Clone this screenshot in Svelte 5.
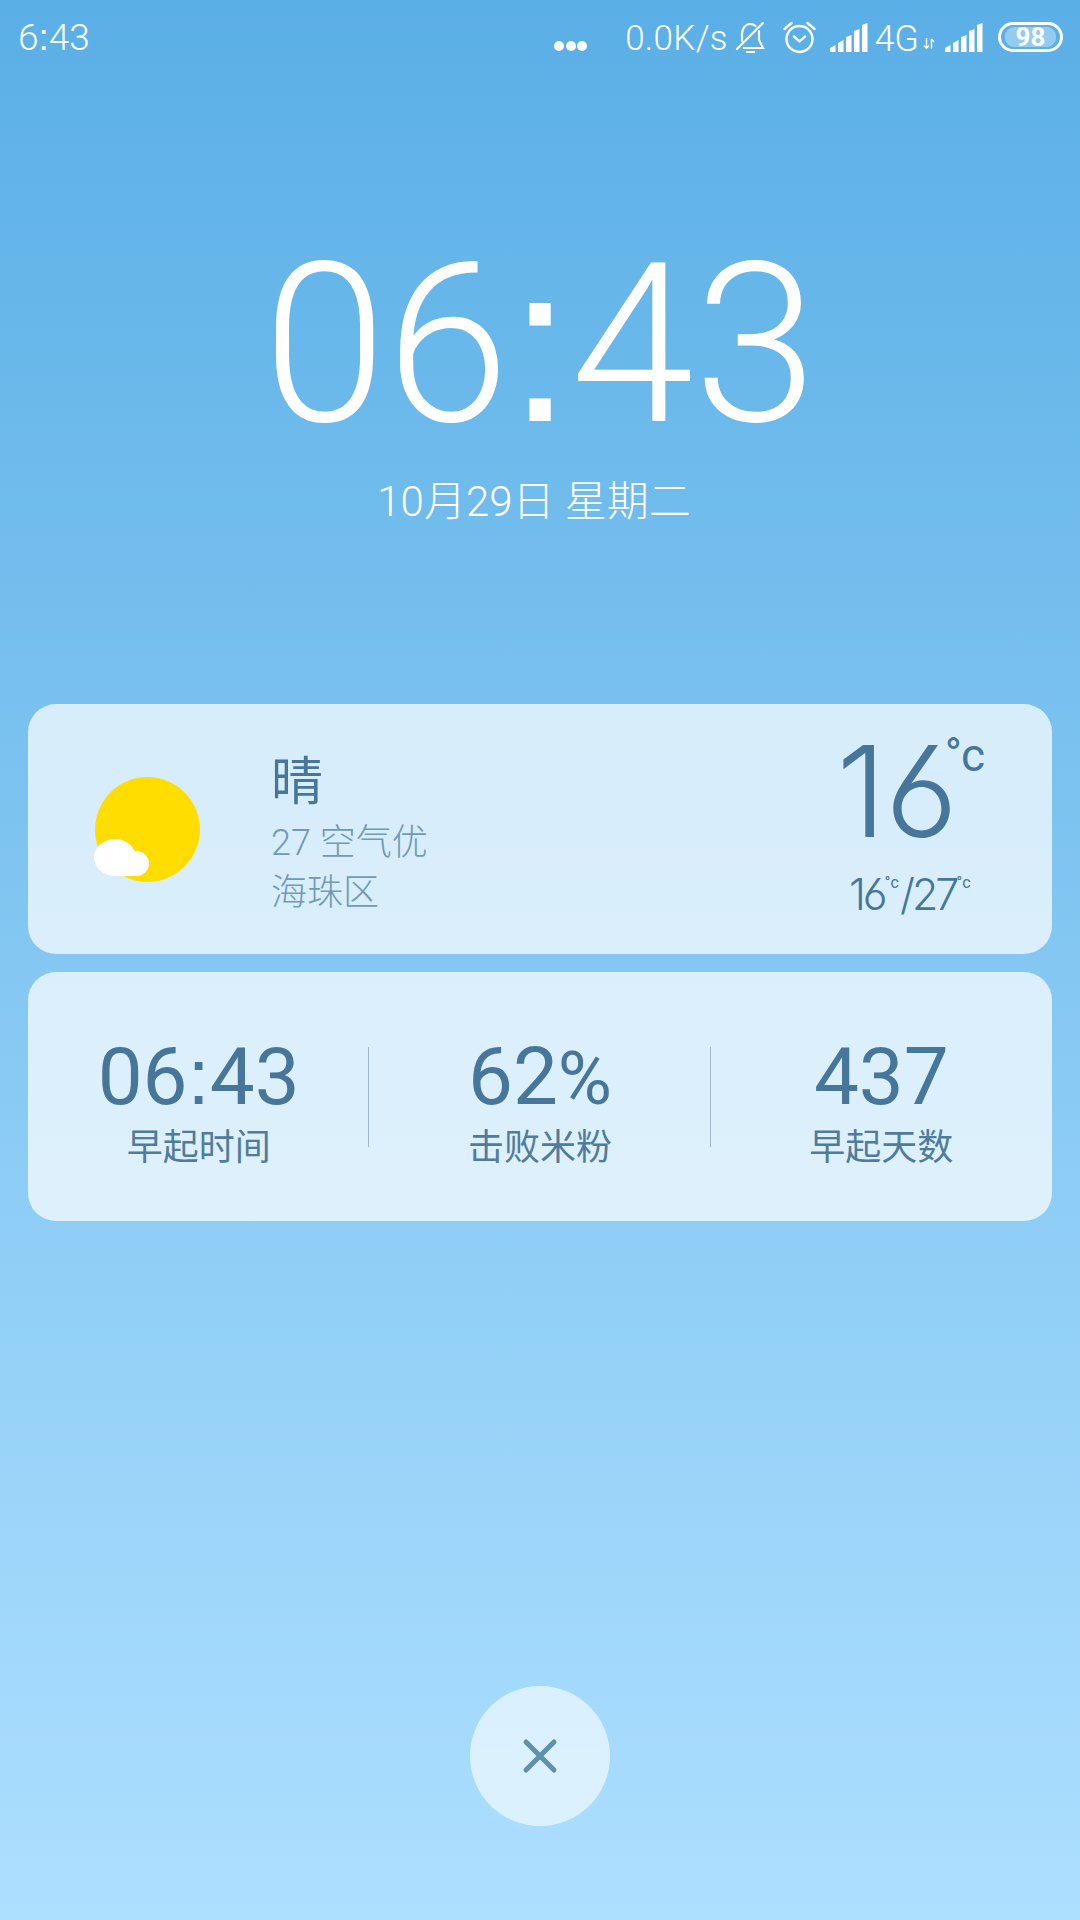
<script>
  const stats = [
    { value: '06', value2: '43', label: '早起时间' },
    { value: '62', unit: '%', label: '击败米粉' },
    { value: '437', label: '早起天数' }
  ];
  const bars = [
    '0,29 0,25 5.5,22 5.5,29',
    '8,29 8,20 13.5,17 13.5,29',
    '16,29 16,14 21.5,12 21.5,29',
    '24,29 24,8 29.5,6 29.5,29',
    '32,29 32,2 37.5,0 37.5,29'
  ];
</script>

{#snippet signal()}
  <svg class="sig" width="38" height="29" viewBox="0 0 38 29" fill="#fff">
    {#each bars as b}<polygon points={b} />{/each}
  </svg>
{/snippet}

<div class="screen">
  <header class="status">
    <span class="time">6<span class="colon">:</span>43</span>
    <div class="right">
      <span class="dots"><i></i><i></i><i></i></span>
      <span class="speed">0.0K/s</span>
      <svg class="bell" width="30" height="31" viewBox="0 0 30 31" fill="none" stroke="#fff" stroke-width="2.2" stroke-linecap="round">
        <path d="M7 19V12C7 6 11 2 15 2c2 0 4 .6 5.500 2"/>
        <path d="M24 9v9l4 8H9"/>
        <path d="M2 27L28 1"/>
        <path d="M12 30h7"/>
      </svg>
      <svg class="alarm" width="33" height="33" viewBox="0 0 33 33" fill="none" stroke="#fff" stroke-width="2.4" stroke-linecap="round">
        <circle cx="16.500" cy="18" r="13"/>
        <path d="M11 15.500l5.500 5 5.500-5"/>
        <path d="M1.500 8l7-6M31.500 8l-7-6"/>
      </svg>
      {@render signal()}
      <span class="net">4G</span>
      <svg class="arrows" width="12" height="13" viewBox="0 0 12 13" fill="none" stroke="#fff" stroke-width="1.400">
        <path d="M3.500 1v10M1 8.500l2.500 3 2.500-3"/>
        <path d="M8.500 12V2M8.500 2l2.500 3"/>
      </svg>
      {@render signal()}
      <span class="batt"><b>98</b></span>
    </div>
  </header>

  <section class="clock">
    <div class="big">06<span class="colon">:</span>43</div>
    <div class="date">10月29日 星期二</div>
  </section>

  <section class="cards">
    <div class="card weather">
      <svg class="sun" width="107" height="105" viewBox="0 0 107 105">
        <circle cx="53.500" cy="52.500" r="52.500" fill="#ffdd00"/>
        <g fill="#fff">
          <ellipse cx="21" cy="80.500" rx="21" ry="18.500"/>
          <circle cx="42.500" cy="86.500" r="12.500"/>
          <rect x="21" y="80" width="22" height="19"/>
        </g>
      </svg>
      <div class="info">
        <div class="cond">晴</div>
        <div class="sub">27 空气优</div>
        <div class="sub">海珠区</div>
      </div>
      <div class="temp">
        <div class="now">16<sup>°c</sup></div>
        <div class="range">16<sup>°c</sup>/27<sup>°c</sup></div>
      </div>
    </div>
    <div class="card stats">
      {#each stats as s, i}
        {#if i > 0}<span class="sep"></span>{/if}
        <div class="stat">
          <div class="val">{s.value}{#if s.value2}<span class="colon">:</span>{s.value2}{/if}{#if s.unit}<span class="unit">{s.unit}</span>{/if}</div>
          <div class="lab">{s.label}</div>
        </div>
      {/each}
    </div>
  </section>

  <button class="close" aria-label="关闭">
    <svg width="40" height="40" viewBox="0 0 40 40" stroke="#5f90ae" stroke-width="5" stroke-linecap="round" fill="none"><path d="M6 6l28 28M34 6L6 34"/></svg>
  </button>
</div>

<style>
  :global(body) { margin: 0; }
  .screen {
    width: 1080px;
    height: 1920px;
    overflow: hidden;
    display: flex;
    flex-direction: column;
    background: linear-gradient(#5aafe6, #addfff);
    font-family: Roboto, "Noto Sans CJK SC", sans-serif;
    color: #fff;
  }
  .colon { font-family: "Liberation Sans", sans-serif; }
  .status {
    height: 74px;
    display: flex;
    align-items: center;
    justify-content: space-between;
    padding: 0 17px 0 18px;
    font-size: 36px;
  }
  .time { font-size: 37px; font-weight: 300; padding-top: 1px; }
  .right { display: flex; align-items: center; }
  .dots { display: flex; gap: 1.5px; margin-right: 38px; padding-top: 18px; }
  .dots i { width: 10px; height: 10px; border-radius: 50%; background: #fff; }
  .speed { font-size: 35px; letter-spacing: .3px; font-weight: 300; margin-right: 7.5px; padding-top: 3px; }
  .bell { margin-right: 17.5px; }
  .alarm { margin-right: 14px; }
  .net { margin: 0 4px 0 6.5px; padding-top: 3px; font-weight: 300; }
  .arrows { margin: 12px 10px 0 0; }
  .batt {
    box-sizing: border-box;
    width: 65px;
    height: 30px;
    border: 3px solid #fff;
    border-radius: 15px;
    padding: 2px 4px;
    margin-left: 15px;
    display: flex;
  }
  .batt b {
    flex: 1;
    border-radius: 9px;
    background: rgba(255, 255, 255, .35);
    font-size: 26px;
    line-height: 20px;
    text-align: center;
  }
  .clock { height: 500px; text-align: center; }
  .big { font-size: 222px; font-weight: 300; line-height: 232px; margin-top: 154px; }
  .date { font-size: 42px; font-weight: 300; margin-top: 6px; padding-right: 12px; }
  .cards { margin: 130px 28px 0; display: flex; flex-direction: column; gap: 18px; }
  .card { background: rgba(255, 255, 255, .7); border-radius: 28px; color: #46769a; }
  .weather { height: 250px; display: flex; align-items: center; padding: 0 68px 0 66px; }
  .info { margin-left: 70px; flex: 1; padding-top: 7px; }
  .cond { font-size: 52px; line-height: 70px; }
  .sub { font-size: 36px; line-height: 50px; color: #6f9ab8; font-weight: 300; }
  .temp { text-align: center; padding-top: 2px; font-family: Inter, Roboto, "Noto Sans CJK SC", sans-serif; font-feature-settings: "cv03", "ss01"; }
  .now { font-size: 126px; font-weight: 300; line-height: 100px; letter-spacing: -1px; white-space: nowrap; }
  .now sup { font-size: 46px; font-weight: 400; letter-spacing: -1px; line-height: 0; vertical-align: 66px; margin-left: -12px; font-family: Roboto, sans-serif; }
  .range { font-size: 43px; font-weight: 300; line-height: 50px; margin-top: 28px; letter-spacing: -3px; white-space: nowrap; }
  .range sup { font-size: 16px; font-weight: 400; letter-spacing: 0; line-height: 0; vertical-align: 22px; margin-right: 1px; font-family: Roboto, sans-serif; }
  .stats { height: 249px; display: flex; align-items: center; padding-top: 4px; box-sizing: border-box; }
  .stat { flex: 1; text-align: center; }
  .sep { width: 1px; height: 100px; background: #9fb6c6; margin: -4px 0 0 -1px; }
  .val { font-size: 80px; line-height: 1; padding-top: 10px; }
  .unit { font-size: 74px; }
  .lab { font-size: 36px; color: #4f7c9c; margin-top: 1px; }
  .close {
    width: 140px;
    height: 140px;
    margin: 465px auto 0;
    border-radius: 50%;
    border: 0;
    padding: 0;
    background: rgba(255, 255, 255, .6);
    display: flex;
    align-items: center;
    justify-content: center;
  }
</style>
